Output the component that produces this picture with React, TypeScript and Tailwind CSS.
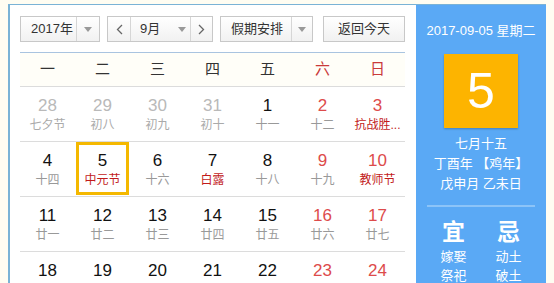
import React from "react";

type Day = { n: number; sub: string; dim?: boolean; wk?: boolean; fest?: boolean; sel?: boolean };

const weeks: Day[][] = [
  [
    { n: 28, sub: "七夕节", dim: true },
    { n: 29, sub: "初八", dim: true },
    { n: 30, sub: "初九", dim: true },
    { n: 31, sub: "初十", dim: true },
    { n: 1, sub: "十一" },
    { n: 2, sub: "十二", wk: true },
    { n: 3, sub: "抗战胜...", wk: true, fest: true },
  ],
  [
    { n: 4, sub: "十四" },
    { n: 5, sub: "中元节", fest: true, sel: true },
    { n: 6, sub: "十六" },
    { n: 7, sub: "白露", fest: true },
    { n: 8, sub: "十八" },
    { n: 9, sub: "十九", wk: true },
    { n: 10, sub: "教师节", wk: true, fest: true },
  ],
  [
    { n: 11, sub: "廿一" },
    { n: 12, sub: "廿二" },
    { n: 13, sub: "廿三" },
    { n: 14, sub: "廿四" },
    { n: 15, sub: "廿五" },
    { n: 16, sub: "廿六", wk: true },
    { n: 17, sub: "廿七", wk: true },
  ],
  [
    { n: 18, sub: "廿八" },
    { n: 19, sub: "廿九" },
    { n: 20, sub: "三十" },
    { n: 21, sub: "八月" },
    { n: 22, sub: "初二" },
    { n: 23, sub: "秋分", wk: true },
    { n: 24, sub: "初四", wk: true },
  ],
];

const heads = ["一", "二", "三", "四", "五", "六", "日"];

function Caret() {
  return (
    <svg width="8" height="5" viewBox="0 0 8 5" className="fill-[#999]">
      <path d="M0 0h8L4 5z" />
    </svg>
  );
}

export default function App() {
  return (
    <div
      className="min-h-screen bg-[#fffdf2] pl-2 pt-1"
      style={{ fontFamily: '"Liberation Sans", "Noto Sans CJK SC", sans-serif' }}
    >
      <div className="flex w-[538px] border-l-2 border-t border-[#7ab3d6]">
        {/* Left: calendar */}
        <div className="w-[406px] bg-white pl-[10px] pr-[11px] pt-[11px]">
          {/* Toolbar */}
          <div className="flex items-center text-[13px] text-[#333]">
            <div className="flex h-[26px] w-[80px] border border-[#c8c8c8] bg-gradient-to-b from-white to-[#f1f1f1]">
              <span className="flex flex-1 items-center pl-[10px]">2017年</span>
              <span className="flex w-[23px] items-center justify-center border-l border-[#d6d6d6]">
                <Caret />
              </span>
            </div>
            <div className="ml-[7px] flex h-[26px] w-[106px] border border-[#c8c8c8] bg-gradient-to-b from-white to-[#f1f1f1]">
              <span className="flex w-[23px] items-center justify-center border-r border-[#d6d6d6] text-[#666]">
                <svg width="7" height="11" viewBox="0 0 7 11" className="stroke-[#666]" fill="none">
                  <path d="M6 1L1.5 5.5L6 10" strokeWidth="1.3" />
                </svg>
              </span>
              <span className="flex flex-1 items-center pl-[9px]">9月</span>
              <span className="flex w-[16px] items-center justify-center">
                <Caret />
              </span>
              <span className="flex w-[22px] items-center justify-center border-l border-[#d6d6d6]">
                <svg width="7" height="11" viewBox="0 0 7 11" className="stroke-[#666]" fill="none">
                  <path d="M1 1L5.5 5.5L1 10" strokeWidth="1.3" />
                </svg>
              </span>
            </div>
            <div className="ml-[7px] flex h-[26px] w-[93px] border border-[#c8c8c8] bg-gradient-to-b from-white to-[#f1f1f1]">
              <span className="flex flex-1 items-center pl-[10px]">假期安排</span>
              <span className="flex w-[21px] items-center justify-center border-l border-[#d6d6d6]">
                <Caret />
              </span>
            </div>
            <div className="ml-[10px] flex h-[26px] w-[82px] items-center justify-center border border-[#c8c8c8] bg-gradient-to-b from-white to-[#f1f1f1]">
              返回今天
            </div>
          </div>

          {/* Grid */}
          <div className="mt-[10px] border-t border-[#a9c4e0]">
            <div className="grid h-[34px] grid-cols-7 items-center border-b border-[#dcdcdc] bg-[#fffef8] text-[15px]">
              {heads.map((h, i) => (
                <div key={h} className={`text-center ${i >= 5 ? "text-[#c93a3a]" : "text-[#333]"}`}>
                  {h}
                </div>
              ))}
            </div>
            {weeks.map((w, wi) => (
              <div key={wi} className="grid h-[55px] grid-cols-7 border-b border-[#dcdcdc]">
                {w.map((d) => (
                  <div key={d.n} className="px-[1px] pb-[1px]">
                    <div
                      className={`flex h-full flex-col items-center border-[3px] pt-[6px] ${
                        d.sel ? "border-[#f4b800]" : "border-transparent"
                      }`}
                    >
                      <span
                        className={`text-[17px] leading-[20px] ${
                          d.dim ? "text-[#b9b9b9]" : d.wk ? "text-[#dd4b4b]" : "text-[#111]"
                        }`}
                      >
                        {d.n}
                      </span>
                      <span
                        className={`mt-[1px] text-[12px] leading-[16px] ${
                          d.fest ? "text-[#c21b1b]" : d.dim ? "text-[#aaa]" : "text-[#999]"
                        }`}
                      >
                        {d.sub}
                      </span>
                    </div>
                  </div>
                ))}
              </div>
            ))}
          </div>
        </div>

        {/* Right: today panel */}
        <div className="flex w-[130px] flex-col items-center bg-[#5aa9f5] pt-[17px] text-white">
          <div className="text-[13px] leading-[18px]">2017-09-05 星期二</div>
          <div className="mt-[14px] flex h-[74px] w-[74px] items-center justify-center bg-[#fdb400] shadow-[0_1px_2px_rgba(0,0,0,0.25)]">
            <span className="text-[50px] leading-none">5</span>
          </div>
          <div className="mt-[6px] flex flex-col items-center text-[13px] leading-[20px]">
            <span>七月十五</span>
            <span>丁酉年 【鸡年】</span>
            <span>戊申月 乙未日</span>
          </div>
          <div className="mt-[11px] h-[2px] w-[108px] bg-[#8cc4f8]" />
          <div className="mt-[11px] flex w-full justify-center gap-[29px]">
            <div className="flex flex-col items-center">
              <span className="text-[23px] font-bold leading-[28px]">宜</span>
              <span className="mt-[1px] text-[13px] leading-[19px]">嫁娶</span>
              <span className="text-[13px] leading-[19px]">祭祀</span>
            </div>
            <div className="flex flex-col items-center">
              <span className="text-[23px] font-bold leading-[28px]">忌</span>
              <span className="mt-[1px] text-[13px] leading-[19px]">动土</span>
              <span className="text-[13px] leading-[19px]">破土</span>
            </div>
          </div>
        </div>
      </div>
    </div>
  );
}
